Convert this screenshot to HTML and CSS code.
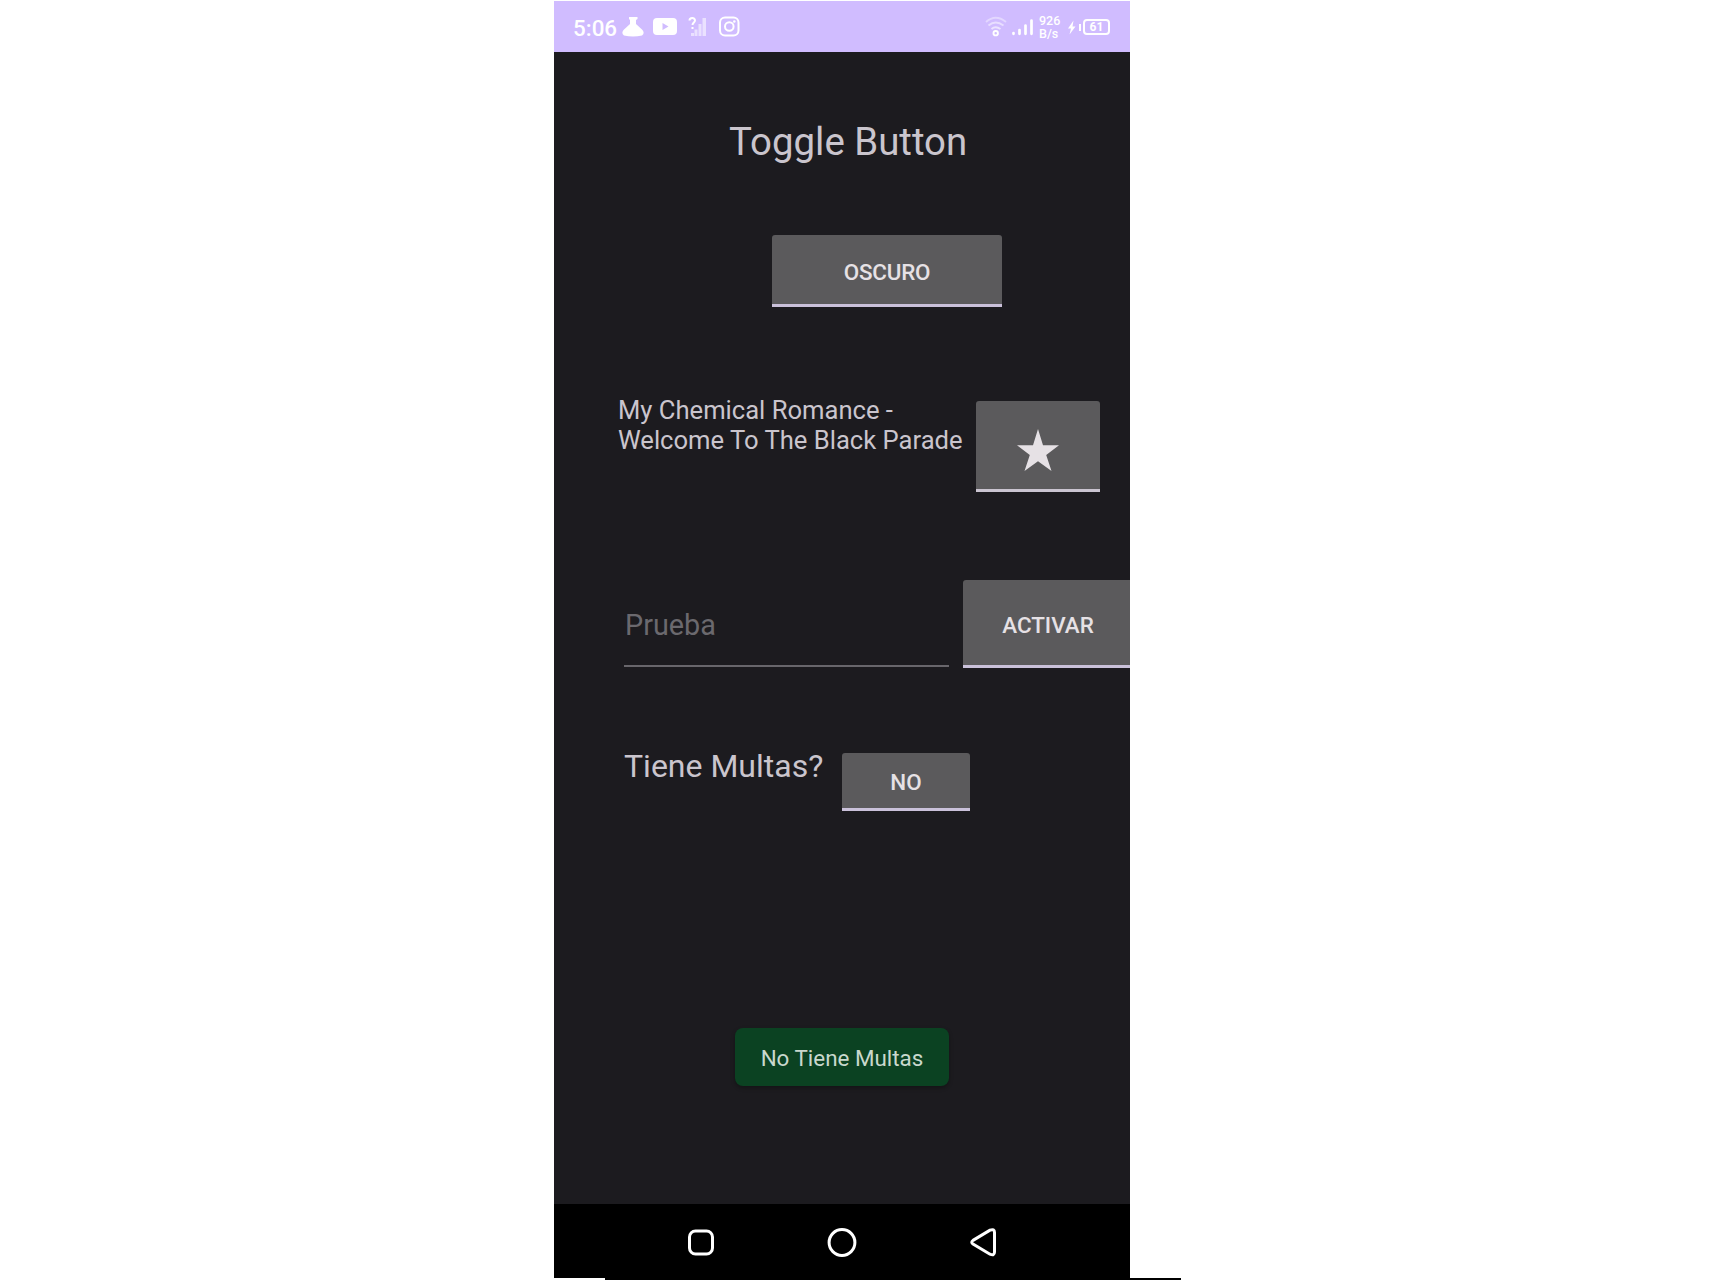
FILE: index.html
```html
<!DOCTYPE html>
<html lang="es">
<head>
<meta charset="utf-8">
<title>Toggle Button</title>
<link rel="stylesheet" href="styles.css">
</head>
<body>
<main class="phone">
  <header class="status">
    <span class="clock">5:06</span>
    <svg class="notifications" width="120" height="24" viewBox="622 15 120 24" fill="#fff">
      <path d="M629 17h8.500v2l-1.500 1v4l6.500 6q2.500 3.500-.5 5.500-9 2-18 0-3-2-.5-5.500l6.500-6v-4l-1-1z"/>
      <path fill-rule="evenodd" d="M657 18h16q4 0 4 4v9q0 4-4 4h-16q-4 0-4-4v-9q0-4 4-4zm5.500 5v7l6-3.500z"/>
      <g opacity=".55"><path d="M691 33h3v3h-3zM694.500 29.500h3v6.500h-3zM698.500 24h3v12h-3zM702.500 18h3.500v18h-3.500z"/></g>
      <path d="M689.500 20.500c0-3 5.500-3.500 5.500 0 0 2-2.500 2-2.500 4.500M692.500 27v2" fill="none" stroke="#fff" stroke-width="2"/>
      <g fill="none" stroke="#fff" stroke-width="2"><rect x="720" y="17.500" width="18.500" height="18" rx="5"/><circle cx="729.300" cy="26.500" r="4.300"/></g>
      <circle cx="734.300" cy="21.500" r="1.300"/>
    </svg>
    <svg class="network" width="50" height="24" viewBox="985 15 50 24" fill="none" stroke="#fff">
      <g stroke-width="1.900"><path opacity=".4" d="M986 22q9.500-8.500 20 0"/><path opacity=".5" d="M988.500 25.500q7-6 15 0"/><path opacity=".6" d="M991.500 29q4-3.500 9 0"/></g>
      <circle cx="995.700" cy="33.200" r="2.200" stroke-width="1.900"/>
      <path stroke-width="2.700" stroke-linecap="round" d="M1013.500 33v.8M1019.500 30v3.800M1025.500 25.500v8.300M1031.500 20.500v13.300"/>
    </svg>
    <div class="speed"><span>926</span><span>B/s</span></div>
    <svg class="charge" width="15" height="20" viewBox="1068 16 15 20" fill="#fff"><path d="M1073.500 19.500l-5.500 8h3l-1.500 6 6-8h-3zM1079 23h2v7h-2z"/></svg>
    <span class="battery">61</span>
  </header>

  <section class="screen">
    <h1 class="title">Toggle Button</h1>
    <button class="toggle toggle-theme">OSCURO</button>

    <div class="song">
      <p class="song-name">My Chemical Romance -<br>Welcome To The Black Parade</p>
      <button class="toggle toggle-star" aria-label="Favorito">
        <svg width="42" height="42" viewBox="0 0 42 42"><path fill="#e6e1e5" d="M21 0l5 16.200h16L29.200 26 34.500 42 21 32.200 7.500 42l5.300-16L0 16.200h16z"/></svg>
      </button>
    </div>

    <div class="entry">
      <div class="field">Prueba</div>
      <button class="toggle toggle-active">ACTIVAR</button>
    </div>

    <div class="fines">
      <p class="fines-label">Tiene Multas?</p>
      <button class="toggle toggle-fines">NO</button>
    </div>

    <div class="toast">No Tiene Multas</div>
  </section>

  <nav class="navbar">
    <svg width="30" height="32" viewBox="0 0 30 32"><rect x="3.500" y="4" width="23" height="23" rx="6"/></svg>
    <svg width="30" height="32" viewBox="0 0 30 32"><circle cx="15" cy="15.500" r="12.900"/></svg>
    <svg width="30" height="32" viewBox="0 0 30 32"><path d="M5 13.400L22 3.200Q26.500 1.400 26.500 5.600V25.100Q26.500 29.100 22 27.200L5 17Q2.500 15.200 5 13.400z"/></svg>
  </nav>
</main>
<div class="bottom-edge"></div>
</body>
</html>
```
FILE: styles.css
```css
* { box-sizing: border-box; }
body {
  margin: 0;
  padding-top: 1px;
  height: 1280px;
  overflow: hidden;
  background: #fff;
  font-family: Roboto, "Liberation Sans", sans-serif;
  color: #cac5cd;
}
h1, p { margin: 0; font-weight: 400; }
svg { display: block; flex: none; }

.phone {
  display: flex;
  flex-direction: column;
  width: 576px;
  height: 1277px;
  margin-left: 554px;
  overflow: hidden;
  background: #1c1b1f;
}

.status {
  display: flex;
  align-items: center;
  flex: none;
  height: 51px;
  padding: 0 20px 0 19px;
  background: #d0bcff;
  color: #fff;
}
.clock { width: 49px; font-size: 22.400px; font-weight: 500; line-height: 26px; padding-top: 2px; }
.network { margin-left: auto; }
.speed {
  display: flex;
  flex-direction: column;
  width: 29px;
  margin-left: 4px;
  font-size: 12.500px;
  font-weight: 500;
  line-height: 13px;
}
.battery {
  width: 27px;
  height: 16px;
  border: 2px solid #fff;
  border-radius: 4px;
  font-size: 12px;
  font-weight: 700;
  line-height: 12px;
  text-align: center;
}

.screen {
  display: flex;
  flex-direction: column;
  align-items: flex-start;
  flex: 1;
  padding-top: 68px;
}
.title { margin-left: 175px; font-size: 38.400px; line-height: 44px; white-space: nowrap; }

.toggle {
  display: flex;
  align-items: center;
  justify-content: center;
  flex: none;
  padding: 0;
  border: 0;
  border-bottom: 3px solid #cac1da;
  border-radius: 3px 3px 0 0;
  background: #5b5a5c;
  color: #e6e1e5;
  font: 500 22.400px/26px Roboto, "Liberation Sans", sans-serif;
}
.toggle-theme { width: 230px; height: 72px; margin: 71px 0 0 218px; padding-top: 4px; letter-spacing: -.2px; }

.song { display: flex; align-items: flex-start; margin: 88px 0 0 64px; }
.song-name { flex: none; width: 358px; font-size: 25.600px; line-height: 30.400px; white-space: nowrap; }
.toggle-star { width: 124px; height: 91px; margin-top: 6px; padding-top: 10px; border-color: #cac4d0; }

.entry { display: flex; margin: 88px 0 0 70px; }
.field {
  flex: none;
  width: 325px;
  height: 87px;
  margin-right: 14px;
  padding: 28px 0 0 1px;
  border-bottom: 2px solid #68666b;
  color: #6b696e;
  font-size: 28.800px;
  line-height: 34px;
}
.toggle-active { width: 186px; height: 88px; padding: 4px 16px 0 0; }

.fines { display: flex; align-items: flex-start; margin: 80px 0 0 70px; }
.fines-label { width: 218px; font-size: 32px; line-height: 37px; white-space: nowrap; }
.toggle-fines { width: 128px; height: 58px; margin-top: 5px; padding-top: 3px; }

.toast {
  align-self: center;
  width: 214px;
  height: 58px;
  margin-top: 217px;
  border-radius: 8px;
  background: #0b4222;
  box-shadow: 0 2px 4px rgba(0, 0, 0, .3);
  color: #c9d8cd;
  font-size: 22.400px;
  line-height: 60px;
  text-align: center;
  white-space: nowrap;
}

.navbar {
  display: flex;
  justify-content: center;
  align-items: flex-start;
  gap: 111px;
  flex: none;
  height: 74px;
  padding-top: 23px;
  background: #000;
}
.navbar svg { fill: none; stroke: #fff; stroke-width: 3; }

.bottom-edge { width: 576px; height: 2px; margin-left: 605px; background: #000; }
```
